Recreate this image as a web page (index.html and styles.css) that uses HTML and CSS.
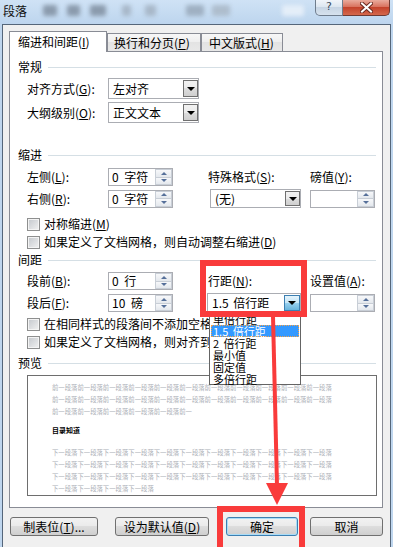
FILE: index.html
```html
<!DOCTYPE html>
<html lang="zh">
<head>
<meta charset="utf-8">
<link rel="stylesheet" href="styles.css">
</head>
<body>
<div class="titlebar">
  <span class="title">段落</span>
  <div class="toolbar-blur">
    <i class="b1"></i><i class="b2"></i><i class="b3"></i><i class="b4"></i><i class="b5"></i><i class="b6"></i><i class="b7"></i><i class="b8"></i>
  </div>
  <div class="caps">
    <div class="cap help">?</div>
    <div class="cap close">
      <svg width="13" height="11" viewBox="0 0 13 11"><path d="M2 1.5 L11 9.5 M11 1.5 L2 9.5" stroke="#6b2a20" stroke-width="4" stroke-linecap="square"/><path d="M2 1.5 L11 9.5 M11 1.5 L2 9.5" stroke="#ffffff" stroke-width="2" stroke-linecap="square"/></svg>
    </div>
  </div>
</div>

<div class="dialog">
  <div class="tabs">
    <div class="tab active">缩进和间距(<u>I</u>)</div>
    <div class="tab t2">换行和分页(<u>P</u>)</div>
    <div class="tab t3">中文版式(<u>H</u>)</div>
  </div>
  <div class="panel">
    <div class="sec s1">常规</div>
    <div class="row r1">
      <span class="lbl">对齐方式(<u>G</u>):</span>
      <div class="select"><span>左对齐</span><b class="arr"></b></div>
    </div>
    <div class="row r2">
      <span class="lbl">大纲级别(<u>O</u>):</span>
      <div class="select"><span>正文文本</span><b class="arr"></b></div>
    </div>

    <div class="sec s2">缩进</div>
    <div class="row r3">
      <span class="lbl">左侧(<u>L</u>):</span>
      <div class="spin"><span>0 字符</span><span class="sb"><i class="up"></i><i class="dn"></i></span></div>
      <span class="lbl">特殊格式(<u>S</u>):</span>
      <span class="lbl">磅值(<u>Y</u>):</span>
    </div>
    <div class="row r4">
      <span class="lbl">右侧(<u>R</u>):</span>
      <div class="spin"><span>0 字符</span><span class="sb"><i class="up"></i><i class="dn"></i></span></div>
      <div class="select sel-none"><span>(无)</span><b class="arr"></b></div>
      <div class="spin"><span></span><span class="sb"><i class="up"></i><i class="dn"></i></span></div>
    </div>
    <div class="cb c1"><i></i><span>对称缩进(<u>M</u>)</span></div>
    <div class="cb c2"><i></i><span>如果定义了文档网格，则自动调整右缩进(<u>D</u>)</span></div>

    <div class="sec s3">间距</div>
    <div class="row r5">
      <span class="lbl">段前(<u>B</u>):</span>
      <div class="spin"><span>0 行</span><span class="sb"><i class="up"></i><i class="dn"></i></span></div>
      <span class="lbl">行距(<u>N</u>):</span>
      <span class="lbl">设置值(<u>A</u>):</span>
    </div>
    <div class="row r6">
      <span class="lbl">段后(<u>F</u>):</span>
      <div class="spin"><span>10 磅</span><span class="sb"><i class="up"></i><i class="dn"></i></span></div>
      <div class="select sel-ls"><span>1.5 倍行距</span><b class="arr hot"></b></div>
      <div class="spin"><span></span><span class="sb"><i class="up"></i><i class="dn"></i></span></div>
    </div>
    <div class="cb c3"><i></i><span>在相同样式的段落间不添加空格(<u>C</u>)</span></div>
    <div class="cb c4"><i></i><span>如果定义了文档网格，则对齐到网格(<u>W</u>)</span></div>

    <div class="sec s4">预览</div>
    <div class="preview">
      <div class="pv">
        <div>前一段落前一段落前一段落前一段落前一段落前一段落前一段落前一段落前一段落前一段落前一段落</div>
        <div>前一段落前一段落前一段落前一段落前一段落前一段落前一段落前一段落前一段落前一段落前一段落</div>
        <div>前一段落前一段落前一段落前一段落前一段落前一</div>
        <div class="cur">目录知道</div>
        <div class="next">下一段落下一段落下一段落下一段落下一段落下一段落下一段落下一段落下一段落下一段落下一段落</div>
        <div>下一段落下一段落下一段落下一段落下一段落下一段落下一段落下一段落下一段落下一段落下一段落</div>
        <div>下一段落下一段落下一段落下一段落下一段落下一段落下一段落下一段落下一段落下一段落下一段落</div>
        <div>下一段落下一段落下一段落下一段落</div>
      </div>
    </div>
  </div>
  <div class="btns">
    <div class="btn bt1">制表位(<u>T</u>)...</div>
    <div class="btn bt2">设为默认值(<u>D</u>)</div>
    <div class="btn bt3">确定</div>
    <div class="btn bt4">取消</div>
  </div>
</div>

<div class="droplist">
  <div>单倍行距</div>
  <div class="hl">1.5 倍行距</div>
  <div>2 倍行距</div>
  <div>最小值</div>
  <div>固定值</div>
  <div>多倍行距</div>
</div>
<div class="redbox rb1"></div>
<div class="redbox rb2"></div>
<svg class="arrow" width="393" height="547" viewBox="0 0 393 547">
  <line x1="273" y1="316" x2="277" y2="486" stroke="#f93b3b" stroke-width="4"/>
  <polygon points="266,483 288,483 277,505" fill="#f93b3b"/>
</svg>
</body>
</html>
```
FILE: styles.css
```css
* { box-sizing: border-box; }

body {
  margin: 0;
  width: 393px;
  height: 547px;
  overflow: hidden;
  position: relative;
  background: #bfd6ee;
  font-family: "Noto Sans CJK SC", "Noto Sans", sans-serif;
  font-size: 12px;
  line-height: 14px;
  color: #000;
}

u { text-decoration: underline; text-underline-offset: 1px; }

/* title bar */
.titlebar {
  height: 24px;
  display: flex;
  align-items: flex-start;
  background: linear-gradient(#cfe2f5, #bdd5ee);
}
.title { margin: 4px 0 0 3px; line-height: 14px; color: #111; }
.toolbar-blur {
  display: flex;
  align-items: center;
  height: 14px;
  margin: 3px 0 0 16px;
  filter: blur(2px);
}
.toolbar-blur i { display: block; height: 11px; border-radius: 2px; background: #8b9bad; }
.toolbar-blur .b1 { width: 14px; }
.toolbar-blur .b2 { width: 13px; margin-left: 10px; }
.toolbar-blur .b3 { width: 16px; margin-left: 10px; }
.toolbar-blur .b4 { width: 9px; margin-left: 16px; background: #a8b8c9; }
.toolbar-blur .b5 { width: 11px; margin-left: 14px; background: #a8b8c9; }
.toolbar-blur .b6 { width: 18px; margin-left: 30px; background: #9fb0c2; }
.toolbar-blur .b7 { width: 18px; margin-left: 8px; background: #aebdcd; }
.toolbar-blur .b8 { width: 22px; margin-left: 52px; background: #e4eef8; }
.caps { margin-left: auto; margin-right: 3px; display: flex; }
.cap { height: 16px; }
.help {
  width: 28px;
  border: 1px solid #6f7d8d;
  border-top: 0;
  border-radius: 0 0 0 5px;
  background: linear-gradient(#f1f5fa, #dbe5ef 50%, #c7d5e4 50%, #d6e2ee);
  text-align: center;
  font-family: "DejaVu Sans", sans-serif;
  font-size: 11px;
  line-height: 14px;
  color: #3a4a5e;
}
.close {
  width: 47px;
  border: 1px solid #6f3a33;
  border-left: 0;
  border-top: 0;
  border-radius: 0 0 5px 0;
  background: linear-gradient(#eaab9d, #d9735f 45%, #c4432c 50%, #d4684c);
  display: flex;
  justify-content: center;
  align-items: center;
}

/* dialog */
.dialog {
  margin: 0 2px;
  height: 523px;
  border: 1px solid #55667a;
  border-bottom: 0;
  background: #f0f0f0;
  padding: 6px 0 0 6px;
}

.tabs { display: flex; align-items: flex-end; height: 20px; }
.tab {
  height: 18px;
  border: 1px solid #898c95;
  border-bottom: 0;
  background: linear-gradient(#f7f7f7, #eeeeee 50%, #e3e3e3 50%, #e8e8e8);
  line-height: 17px;
  white-space: nowrap;
}
.tab.active {
  position: relative;
  z-index: 1;
  width: 98px;
  height: 21px;
  margin-bottom: -1px;
  padding-left: 8px;
  line-height: 20px;
  background: #fff;
}
.t2 { width: 94px; padding-left: 6px; }
.t3 { width: 82px; padding-left: 7px; }

.panel {
  width: 374px;
  height: 457px;
  border: 1px solid #898c95;
  background: #fff;
}

.sec { display: flex; align-items: center; height: 16px; padding: 0 6px 0 8px; }
.sec::after { content: ""; flex: 1; height: 1px; background: #d5dfe5; margin-left: 6px; }
.s1 { margin-top: 7px; }
.s2 { margin-top: 24px; }
.s3 { margin-top: 3px; }
.s4 { margin-top: 6px; }

.row {
  display: grid;
  grid-template-columns: 81px 100px 102px auto;
  align-items: center;
  padding-left: 17px;
}
.lbl { white-space: nowrap; }
.r1, .r2 { margin-top: 3px; height: 21px; }
.r3 { margin-top: 5px; height: 18px; }
.r4 { margin-top: 3px; height: 19px; }
.r5 { margin-top: 4px; height: 18px; }
.r6 { margin-top: 3px; height: 20px; }

.select {
  display: flex;
  align-items: center;
  width: 91px;
  height: 21px;
  border: 1px solid #abadb3;
  background: #fff;
  padding: 1px 0 1px 4px;
  white-space: nowrap;
}
.select.sel-none { height: 19px; margin-left: 2px; }
.select.sel-ls { width: 94px; height: 20px; margin-left: -1px; word-spacing: 2px; }
.arr {
  margin-left: auto;
  width: 15px;
  height: 100%;
  border: 1px solid #707070;
  background: linear-gradient(#f2f2f2, #ebebeb 50%, #dddddd 50%, #cfcfcf);
  display: flex;
  align-items: center;
  justify-content: center;
}
.arr::before {
  content: "";
  border-left: 4px solid transparent;
  border-right: 4px solid transparent;
  border-top: 4px solid #000;
}
.arr.hot {
  width: 16px;
  border-color: #3c7fb1;
  background: linear-gradient(#e5f4fc, #c4e5f6 50%, #98d1ef 50%, #68b3db);
}

.spin {
  display: flex;
  align-items: center;
  width: 65px;
  height: 18px;
  border: 1px solid #abadb3;
  background: #fff;
  padding: 0 0 0 3px;
  white-space: nowrap;
  word-spacing: 3px;
}
.sb {
  margin-left: auto;
  width: 17px;
  height: 16px;
  display: flex;
  flex-direction: column;
}
.sb i {
  flex: 1;
  display: flex;
  align-items: center;
  justify-content: center;
  border: 1px solid #c8ced6;
  background: linear-gradient(#f7f8fa, #e4e8ed);
}
.sb i.dn { border-top: 0; }
.sb i.up::before {
  content: "";
  border-left: 3px solid transparent;
  border-right: 3px solid transparent;
  border-bottom: 3px solid #56709a;
}
.sb i.dn::before {
  content: "";
  border-left: 3px solid transparent;
  border-right: 3px solid transparent;
  border-top: 3px solid #56709a;
}

.cb { display: flex; align-items: center; height: 14px; padding-left: 17px; white-space: nowrap; }
.cb i {
  flex: none;
  width: 13px;
  height: 13px;
  margin-right: 4px;
  border: 1px solid #8e8f8f;
  background: linear-gradient(135deg, #c3c7cc, #f2f2f2);
  box-shadow: inset 0 0 0 1px #f4f4f4;
}
.c1 { margin-top: 9px; }
.c2 { margin-top: 4px; }
.c3 { margin-top: 4px; }
.c4 { margin-top: 4px; }

.preview {
  margin: 4px 0 0 17px;
  width: 350px;
  height: 121px;
  border: 1px solid #6e6e6e;
  overflow: hidden;
}
.pv {
  padding: 6px 0 0 24px;
  font-size: 6.36px;
  line-height: 12px;
  white-space: nowrap;
  color: #acb0b7;
}
.pv .cur { margin-top: 6px; color: #000; font-weight: bold; font-size: 7px; }
.pv .next { margin-top: 11px; }

.btns { display: flex; margin-top: 9px; padding-left: 1px; }
.btn {
  height: 19px;
  border: 1px solid #707070;
  border-radius: 3px;
  background: linear-gradient(#f2f2f2, #ebebeb 45%, #dddddd 50%, #cfcfcf);
  text-align: center;
  line-height: 17px;
  white-space: nowrap;
}
.bt1 { width: 88px; }
.bt2 { width: 94px; margin-left: 17px; }
.bt3 { width: 72px; margin-left: 17px; border-color: #3c7fb1; box-shadow: inset 0 0 0 1px #a9dcf7; }
.bt4 { width: 73px; margin-left: 12px; }

/* overlays */
.droplist {
  position: absolute;
  left: 209px;
  top: 312px;
  width: 92px;
  height: 73px;
  border: 1px solid #646464;
  background: #fff;
  padding: 0 1px;
  z-index: 5;
}
.droplist div {
  height: 12px;
  line-height: 12px;
  padding-left: 2px;
  font-size: 11px;
  white-space: nowrap;
  word-spacing: 2px;
}
.droplist .hl { background: #3399ff; color: #fff; outline: 1px dotted #f3a24a; outline-offset: -1px; }

.redbox { position: absolute; border: 6px solid #f93b3b; z-index: 6; }
.rb1 { left: 200px; top: 260px; width: 107px; height: 57px; }
.rb2 { left: 217px; top: 506px; width: 88px; height: 47px; }

.arrow { position: absolute; left: 0; top: 0; z-index: 6; pointer-events: none; }
```
